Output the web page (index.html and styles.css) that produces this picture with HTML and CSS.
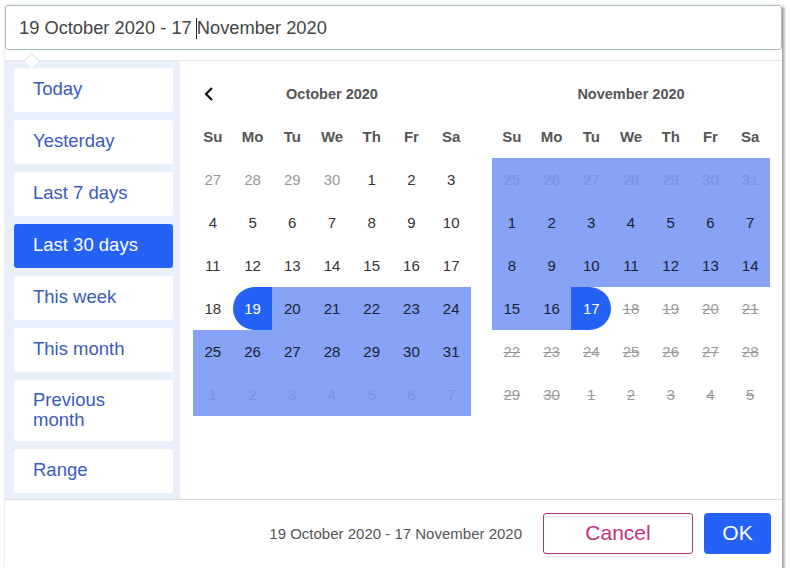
FILE: index.html
```html
<!DOCTYPE html>
<html lang="en">

<head>
    <meta charset="UTF-8">
    <meta name="viewport" content="width=device-width, initial-scale=1.0">
    <title>Date Range Picker</title>
    <link rel="stylesheet" href="styles.css">
</head>

<body>
    <div class="picker">
        <div class="picker-input">19 October 2020 - 17<span class="caret"></span>November 2020</div>

        <div class="popup">
            <div class="popup-body">
                <ul class="ranges">
                    <li class="range-item">Today</li>
                    <li class="range-item">Yesterday</li>
                    <li class="range-item">Last 7 days</li>
                    <li class="range-item active">Last 30 days</li>
                    <li class="range-item">This week</li>
                    <li class="range-item">This month</li>
                    <li class="range-item tall">Previous<br>month</li>
                    <li class="range-item">Range</li>
                </ul>

                <div class="calendars">
                    <!-- October -->
                    <div class="month">
                        <div class="month-head">
                            <button class="nav-btn" type="button">
                                <svg width="12" height="16" viewBox="0 0 12 16">
                                    <path d="M9 2 L3 8 L9 14" fill="none" stroke="#111" stroke-width="2.2" />
                                </svg>
                            </button>
                            <span class="month-title">October 2020</span>
                            <span></span>
                        </div>
                        <div class="days">
                            <span class="wd">Su</span><span class="wd">Mo</span><span class="wd">Tu</span><span class="wd">We</span><span class="wd">Th</span><span class="wd">Fr</span><span class="wd">Sa</span>

                            <span class="day muted">27</span><span class="day muted">28</span><span class="day muted">29</span><span class="day muted">30</span><span class="day">1</span><span class="day">2</span><span class="day">3</span>
                            <span class="day">4</span><span class="day">5</span><span class="day">6</span><span class="day">7</span><span class="day">8</span><span class="day">9</span><span class="day">10</span>
                            <span class="day">11</span><span class="day">12</span><span class="day">13</span><span class="day">14</span><span class="day">15</span><span class="day">16</span><span class="day">17</span>
                            <span class="day">18</span><span class="day start">19</span><span class="day in-range">20</span><span class="day in-range">21</span><span class="day in-range">22</span><span class="day in-range">23</span><span class="day in-range">24</span>
                            <span class="day in-range">25</span><span class="day in-range">26</span><span class="day in-range">27</span><span class="day in-range">28</span><span class="day in-range">29</span><span class="day in-range">30</span><span class="day in-range">31</span>
                            <span class="day in-range faded">1</span><span class="day in-range faded">2</span><span class="day in-range faded">3</span><span class="day in-range faded">4</span><span class="day in-range faded">5</span><span class="day in-range faded">6</span><span class="day in-range faded">7</span>
                        </div>
                    </div>

                    <!-- November -->
                    <div class="month">
                        <div class="month-head">
                            <span></span>
                            <span class="month-title">November 2020</span>
                            <span></span>
                        </div>
                        <div class="days">
                            <span class="wd">Su</span><span class="wd">Mo</span><span class="wd">Tu</span><span class="wd">We</span><span class="wd">Th</span><span class="wd">Fr</span><span class="wd">Sa</span>

                            <span class="day in-range faded">25</span><span class="day in-range faded">26</span><span class="day in-range faded">27</span><span class="day in-range faded">28</span><span class="day in-range faded">29</span><span class="day in-range faded">30</span><span class="day in-range faded">31</span>
                            <span class="day in-range">1</span><span class="day in-range">2</span><span class="day in-range">3</span><span class="day in-range">4</span><span class="day in-range">5</span><span class="day in-range">6</span><span class="day in-range">7</span>
                            <span class="day in-range">8</span><span class="day in-range">9</span><span class="day in-range">10</span><span class="day in-range">11</span><span class="day in-range">12</span><span class="day in-range">13</span><span class="day in-range">14</span>
                            <span class="day in-range">15</span><span class="day in-range">16</span><span class="day end">17</span><span class="day disabled">18</span><span class="day disabled">19</span><span class="day disabled">20</span><span class="day disabled">21</span>
                            <span class="day disabled">22</span><span class="day disabled">23</span><span class="day disabled">24</span><span class="day disabled">25</span><span class="day disabled">26</span><span class="day disabled">27</span><span class="day disabled">28</span>
                            <span class="day disabled">29</span><span class="day disabled">30</span><span class="day disabled">1</span><span class="day disabled">2</span><span class="day disabled">3</span><span class="day disabled">4</span><span class="day disabled">5</span>
                        </div>
                    </div>
                </div>
            </div>

            <div class="popup-footer">
                <span class="selected-range">19 October 2020 - 17 November 2020</span>
                <button class="btn btn-cancel" type="button">Cancel</button>
                <button class="btn btn-ok" type="button">OK</button>
            </div>
        </div>
    </div>
</body>

</html>
```

FILE: styles.css
```css
/* Global styles */
body {
    margin: 0;
    padding: 0;
    background-color: #fff;
    font-family: "Liberation Sans", Arial, sans-serif;
}

.picker {
    width: 777px;
    margin: 5px 0 0 5px;
    background-color: #fff;
    box-shadow: 2px 2px 3px rgba(0, 0, 0, 0.4), 0 0 2px rgba(0, 0, 0, 0.12);
}

/* Input */
.picker-input {
    box-sizing: border-box;
    height: 45px;
    padding: 1px 0 0 13px;
    border: 1px solid #a9bcc6;
    border-radius: 3px;
    display: flex;
    align-items: center;
    font-size: 18.3px;
    color: #444;
}

.caret {
    display: inline-block;
    width: 1px;
    height: 21px;
    margin: 0 0 0 4px;
    background-color: #222;
}

/* Popup */
.popup {
    position: relative;
    margin-top: 10px;
    border-top: 1px solid #e2e5ea;
}

.popup::before {
    content: "";
    position: absolute;
    left: 21px;
    top: -6px;
    width: 10px;
    height: 10px;
    background-color: #fff;
    border-top: 1px solid #dfe3e8;
    border-left: 1px solid #dfe3e8;
    transform: rotate(45deg);
}

.popup-body {
    display: flex;
    height: 438px;
}

/* Ranges sidebar */
.ranges {
    list-style: none;
    margin: 0;
    padding: 7px 7px 0 9px;
    width: 175px;
    box-sizing: border-box;
    background-color: #e9effb;
    display: flex;
    flex-direction: column;
    gap: 8px;
}

.range-item {
    height: 44px;
    flex-shrink: 0;
    box-sizing: border-box;
    padding: 0 19px 2px;
    display: flex;
    align-items: center;
    background-color: #fff;
    border-radius: 3px;
    font-size: 18.5px;
    line-height: 1.05;
    color: #3a5bbd;
}

.range-item.tall {
    height: 61px;
    padding-top: 0;
}

.range-item.active {
    background-color: #2362f5;
    color: #fff;
}

/* Calendars */
.calendars {
    flex: 1;
    display: flex;
    gap: 21px;
    padding: 16px 0 0 13px;
}

.month {
    width: 278px;
}

.month-head {
    display: grid;
    grid-template-columns: 40px 1fr 40px;
    align-items: center;
    height: 34px;
    margin-bottom: 4px;
}

.nav-btn {
    border: none;
    background: none;
    padding: 0 0 0 10px;
    height: 34px;
    display: flex;
    align-items: center;
    cursor: pointer;
}

.month-title {
    text-align: center;
    font-weight: bold;
    font-size: 14.5px;
    color: #555;
}

.days {
    display: grid;
    grid-template-columns: repeat(7, 1fr);
    grid-auto-rows: 43px;
}

.wd,
.day {
    display: flex;
    align-items: center;
    justify-content: center;
    font-size: 15px;
}

.wd {
    font-weight: bold;
    color: #555;
}

.day {
    color: #333;
}

.day.muted {
    color: #999;
}

.day.in-range {
    background-color: #86a3f5;
    color: #1b1f33;
}

.day.in-range.faded {
    color: #7b94dc;
}

.day.start,
.day.end {
    background-color: #2362f5;
    color: #fff;
}

.day.start {
    border-radius: 22px 0 0 22px;
}

.day.end {
    border-radius: 0 22px 22px 0;
}

.day.disabled {
    color: #999;
    text-decoration: line-through;
}

/* Footer */
.popup-footer {
    height: 66px;
    border-top: 1px solid #dcdcdc;
    display: flex;
    justify-content: flex-end;
    align-items: center;
    padding: 0 11px 2px 0;
}

.selected-range {
    font-size: 15px;
    color: #555;
    margin-right: 21px;
}

.btn {
    height: 41px;
    border-radius: 3px;
    font-family: "Liberation Sans", Arial, sans-serif;
    font-size: 21px;
    cursor: pointer;
}

.btn-cancel {
    width: 150px;
    margin-right: 11px;
    background-color: #fff;
    border: 1px solid #a8397a;
    color: #c3307f;
}

.btn-ok {
    width: 67px;
    border: none;
    border-radius: 4px;
    background-color: #2362f5;
    color: #fff;
}
```
